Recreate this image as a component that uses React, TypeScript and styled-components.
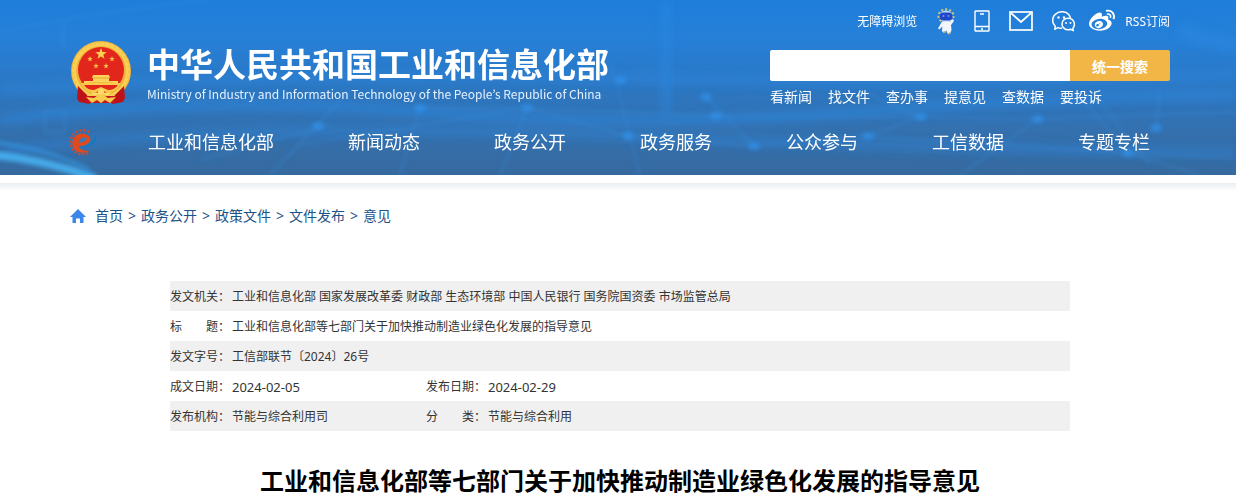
import React from "react";
import styled, { createGlobalStyle } from "styled-components";
import { FaWeibo } from "react-icons/fa";

const GlobalStyle = createGlobalStyle`
  * { box-sizing: border-box; }
  body {
    margin: 0;
    background: #fff;
    color: #333;
    font-family: "Noto Sans", "Noto Sans CJK SC", sans-serif;
    font-size: 12px;
  }
  a { color: inherit; text-decoration: none; }
`;

const Page = styled.div`
  overflow: hidden;
`;

const Container = styled.div<{ $width: number }>`
  width: 100%;
  max-width: ${(p) => p.$width + 4}px;
  margin: 0 auto;
  padding-left: 4px;
  position: relative;
`;

const Header = styled.header`
  position: relative;
  color: #fff;
  background: linear-gradient(#1e7edb 0%, #2680d8 22%, #2c77c2 50%, #3470ae 75%, #366a9f 100%);
`;

const Backdrop = styled.svg`
  position: absolute;
  inset: 0;
  width: 100%;
  height: 100%;
`;

const Masthead = styled.div`
  display: flex;
  justify-content: space-between;
`;

const Brand = styled.a`
  display: flex;
  gap: 15px;
  padding-top: 40px;
`;

const BrandText = styled.div`
  padding-top: 6px;
  white-space: nowrap;
`;

const BrandName = styled.div`
  font-family: "Noto Sans CJK SC", sans-serif;
  font-size: 33px;
  line-height: 34px;
  font-weight: 700;
`;

const BrandSub = styled.div`
  font-family: "Noto Sans CJK KR", sans-serif;
  font-size: 12px;
  line-height: 20px;
  padding-top: 4px;
  color: #e4f1ff;
`;

const Tools = styled.div`
  width: 400px;
`;

const UtilityBar = styled.div`
  display: flex;
  align-items: center;
  justify-content: flex-end;
  height: 42px;
`;

const UtilityLink = styled.a<{ $gap?: number }>`
  display: flex;
  align-items: center;
  margin-left: ${(p) => p.$gap ?? 0}px;
  white-space: nowrap;
`;

const SearchForm = styled.form`
  display: flex;
  height: 31px;
  margin-top: 8px;
  border-radius: 2px;
  overflow: hidden;
`;

const SearchInput = styled.input`
  flex: 1;
  min-width: 0;
  border: 0;
  padding: 0 10px;
  outline: none;
  background: #fff;
  font: inherit;
`;

const SearchButton = styled.button`
  width: 100px;
  border: 0;
  padding: 0;
  background: #f2b647;
  color: #fff;
  font: inherit;
  font-size: 14px;
  font-weight: 700;
`;

const QuickLinks = styled.div`
  display: flex;
  gap: 16px;
  font-size: 14px;
  line-height: 32px;
`;

const Nav = styled.nav`
  display: flex;
  align-items: center;
  gap: 74px;
  padding: 11px 0 15px;
  font-size: 18px;
  line-height: 36px;
  white-space: nowrap;
`;

const NavLogo = styled.a`
  display: flex;
  width: 28px;
  margin: 0 -23px 0 -1px;
`;

const Strip = styled.div`
  height: 8px;
  margin-top: 8px;
  background: linear-gradient(#e9edf1, #fff);
`;

const Breadcrumb = styled.nav`
  display: flex;
  align-items: center;
  gap: 5px;
  padding-top: 15px;
  font-size: 14px;
  line-height: 20px;
  color: #1d5288;
`;

const HomeIcon = styled.svg`
  margin-right: 4px;
`;

const InfoTable = styled.table`
  width: 100%;
  margin-top: 55px;
  border-collapse: collapse;
  table-layout: fixed;
  line-height: 28px;

  tr:nth-child(odd) { background: #f0f0f0; }
  th, td {
    height: 30px;
    padding: 2px 0 0;
    text-align: left;
    vertical-align: middle;
    font-weight: 400;
    white-space: nowrap;
  }
`;

const DateText = styled.time`
  display: block;
  font-size: 13px;
`;

const Title = styled.h1`
  margin: 0;
  padding-top: 32px;
  color: #000;
  font-size: 24px;
  line-height: 36px;
  font-weight: 700;
  text-align: center;
`;

const starPoints = (cx: number, cy: number, r: number) =>
  Array.from({ length: 10 }, (_, i) => {
    const radius = i % 2 ? r * 0.4 : r;
    const a = (Math.PI / 5) * i - Math.PI / 2;
    return `${(cx + radius * Math.cos(a)).toFixed(2)},${(cy + radius * Math.sin(a)).toFixed(2)}`;
  }).join(" ");

const Emblem = () => (
  <svg width="62" height="65" viewBox="0 0 62 65" aria-hidden="true">
    <circle cx="31" cy="31" r="30" fill="#eeb43a" />
    <circle cx="31" cy="31" r="27" fill="none" stroke="#fbcf55" strokeWidth="4" />
    <circle cx="31" cy="31" r="28" fill="none" stroke="#f5c346" strokeWidth="2" strokeDasharray="2 3" />
    <circle cx="31" cy="30" r="23" fill="#e3261c" />
    <polygon points={starPoints(31, 14, 6)} fill="#ffd34f" />
    <polygon points={starPoints(20, 19, 3)} fill="#f4c04a" />
    <polygon points={starPoints(42, 19, 3)} fill="#f4c04a" />
    <polygon points={starPoints(26, 26, 3)} fill="#f4c04a" />
    <polygon points={starPoints(36, 26, 3)} fill="#f4c04a" />
    <path d="M23 35h16l1 3h-1v3h9v3H14v-3h9v-3h-1z" fill="#fbd35a" />
    <path d="M23 38h16M19 43h24" stroke="#e8a530" />
    <path d="M11 43h40q-5 9-13 10l-7-3-7 3q-8-1-13-10z" fill="#fbc94c" />
    <path d="M14 45h34q-3 5-10 5l-7-3-7 3q-7 0-10-5z" fill="#e3261c" />
    <path d="M8 46l9 9 3 9-11-2-2-4z M54 46l-9 9-3 9 11-2 2-4z" fill="#bd1218" />
    <path d="M16 56h30l-2 7H18z" fill="#c9181c" />
    <path d="M16 57l8 1 7-5 7 5 8-1-6 6-5-3-4 3-4-3-5 3z" fill="#f7cb4d" />
    <path d="M22 53q5 3 9-2 4 5 9 2" fill="none" stroke="#ffdc69" strokeWidth="2" />
    <circle cx="31" cy="52" r="3" fill="#ffdc69" />
  </svg>
);

const Mascot = () => (
  <svg width="18" height="27" viewBox="0 0 18 27" aria-hidden="true">
    <ellipse cx="9" cy="8" rx="7.4" ry="6.6" fill="none" stroke="#c9c67c" strokeWidth="2.4" strokeDasharray="2 2" />
    <ellipse cx="9" cy="8.500" rx="6.500" ry="6" fill="#b8dcff" />
    <rect x="2.500" y="4.500" width="13" height="8" rx="4" fill="#2346c4" />
    <circle cx="6.500" cy="8" r="1" fill="#6c98f5" />
    <circle cx="11.500" cy="8" r="1" fill="#6c98f5" />
    <path d="M5 13.500h8l3-2.500 1 2-3 4 .5 5-1.500 4-2.500-.5-1-3-2 2-2.500-1 .3-5-3 3-1.300-1z" fill="#f2f6fb" />
    <path d="M6 24.500l3-1M11 26l2-1" stroke="#c6ad73" strokeWidth="1.500" />
  </svg>
);

const PhoneIcon = () => (
  <svg width="16" height="22" viewBox="0 0 16 22" fill="none" stroke="#fff" strokeWidth="1.400" aria-hidden="true">
    <rect x="1" y="1" width="14" height="20" rx=".5" />
    <path d="M1 16.500h14M6 4h4M7 19h2" />
  </svg>
);

const MailIcon = () => (
  <svg width="24" height="20" viewBox="0 0 24 20" fill="none" stroke="#fff" strokeWidth="1.700" aria-hidden="true">
    <rect x="1" y="1" width="22" height="18" />
    <path d="M2 2l10 9L22 2" />
  </svg>
);

const WechatIcon = () => (
  <svg width="23" height="21" viewBox="0 0 23 21" fill="none" stroke="#fff" strokeWidth="1.500" strokeLinejoin="round" aria-hidden="true">
    <path d="M10 17.200Q7.500 17.400 5.800 16.600L2.800 18.300 3.300 15.200C-.5 12 0 6 3.500 3.200C7-.2 13.500 0 16.500 3.200Q18.200 5 18.300 7" />
    <path d="M16.200 7.200C12.600 7.200 10 9.800 10 13S12.800 18.800 16.300 18.800Q17.700 18.800 18.900 18.300L21.300 19.700 20.900 17.200C24.100 13.400 21.800 7.200 16.200 7.200Z" />
    <g fill="#fff" stroke="none">
      <circle cx="6.500" cy="6.500" r="1.200" />
      <circle cx="12" cy="6.500" r="1.200" />
      <circle cx="14" cy="12" r="1" />
      <circle cx="18.500" cy="12" r="1" />
    </g>
  </svg>
);

const GearLogo = () => (
  <svg width="28" height="26" viewBox="2 1 25 23" fill="none" aria-hidden="true">
    <path d="M20 3.600A10.800 10.800 0 1 0 20.500 21.500" stroke="#d04a2c" strokeWidth="2.200" strokeDasharray="1.800 1.800" />
    <path d="M20 7.500C17 4 10 3.500 6.500 8.500C3.500 13 5 19 10 21.200C13.500 22.700 18 22 20.500 20C16 21 11.500 19.500 10.500 16C14 16.500 18.500 15 20.500 12Q22 9.500 20 7.500Z" fill="#e24a1b" />
    <path d="M10.500 13.200C11 9.500 15 7.500 17.500 9C18.500 11 15 13 10.500 13.200Z" fill="#3d79b8" />
    <path d="M26 6.500C27.500 10 24 15.500 18.500 17Q15 18 12 16.800C18 16.500 22.500 13.500 24 9Z" fill="#1778be" />
  </svg>
);

const nodes = [
  [420, 108], [527, 108], [628, 136], [621, 80], [716, 116], [754, 146],
  [868, 136], [921, 117], [1038, 119], [1156, 128], [1128, 153], [318, 126], [706, 97],
];

const HeaderBackdrop = () => (
  <Backdrop viewBox="0 0 1236 175" preserveAspectRatio="none" aria-hidden="true">
    <defs>
      <filter id="soft" x="-20%" y="-20%" width="140%" height="140%">
        <feGaussianBlur stdDeviation="2" />
      </filter>
      <filter id="haze" filterUnits="userSpaceOnUse" x="-20" y="-20" width="1276" height="215">
        <feGaussianBlur stdDeviation="5" />
      </filter>
    </defs>
    <g fill="none" stroke="#2d8ae4" filter="url(#haze)">
      <path d="M0 120Q200 95 420 112T860 112T1236 95" strokeWidth="8" opacity=".6" />
      <path d="M0 152Q220 120 628 136T1236 152" strokeWidth="7" opacity=".5" />
      <path d="M0 90Q300 70 640 78T1236 75" strokeWidth="9" opacity=".45" />
      <path d="M1180 30L1236 48" strokeWidth="14" opacity=".5" />
      <path d="M666 0V112" strokeWidth="9" opacity=".5" />
    </g>
    <g fill="none" stroke="#3a92e2" strokeWidth="2" opacity=".38" filter="url(#soft)">
      <path d="M0 32Q80 14 210 0M63 24V50M45 112h20v20H45z" />
      <path d="M400 175L420 108 527 108 716 116 921 117 1038 119 1236 112" />
      <path d="M300 145L527 108 628 136 754 146 868 136 1128 153 1236 158" />
      <path d="M610 60L640 175M500 175L527 108 M706 97L754 146 868 136 921 117 860 90" />
      <path d="M1090 90L1150 165M1156 128L1160 90M1038 119L960 175M1080 96L1128 153 1200 175" />
      <path d="M270 175L350 90M200 160L330 125" />
    </g>
    <g fill="#3094ef" filter="url(#soft)" opacity=".65">
      {nodes.map(([x, y]) => <ellipse key={`${x}-${y}`} cx={x} cy={y} rx="6" ry="4" />)}
    </g>
    <path d="M-5 155Q45 160 95 178" fill="none" stroke="#49b6f6" strokeWidth="8" opacity=".85" filter="url(#soft)" />
    <path d="M-5 142Q50 150 90 170" fill="none" stroke="#329be9" strokeWidth="3" opacity=".8" filter="url(#soft)" />
  </Backdrop>
);

const quick = ["看新闻", "找文件", "查办事", "提意见", "查数据", "要投诉"];
const sections = ["工业和信息化部", "新闻动态", "政务公开", "政务服务", "公众参与", "工信数据", "专题专栏"];
const crumbs = ["首页", "政务公开", "政策文件", "文件发布", "意见"];

export default function App() {
  return (
    <Page>
      <GlobalStyle />
      <Header>
        <HeaderBackdrop />
        <Container $width={1100}>
          <Masthead>
            <Brand href="#">
              <Emblem />
              <BrandText>
                <BrandName>中华人民共和国工业和信息化部</BrandName>
                <BrandSub>Ministry of Industry and Information Technology of the People’s Republic of China</BrandSub>
              </BrandText>
            </Brand>
            <Tools>
              <UtilityBar>
                <UtilityLink href="#">无障碍浏览</UtilityLink>
                <UtilityLink href="#" $gap={20} aria-label="智能问答"><Mascot /></UtilityLink>
                <UtilityLink href="#" $gap={19} aria-label="手机版"><PhoneIcon /></UtilityLink>
                <UtilityLink href="#" $gap={19} aria-label="邮箱"><MailIcon /></UtilityLink>
                <UtilityLink href="#" $gap={19} aria-label="微信"><WechatIcon /></UtilityLink>
                <UtilityLink href="#" $gap={14} aria-label="微博"><FaWeibo size={26} /></UtilityLink>
                <UtilityLink href="#" $gap={10}>RSS订阅</UtilityLink>
              </UtilityBar>
              <SearchForm role="search" onSubmit={(e) => e.preventDefault()}>
                <SearchInput type="text" aria-label="搜索" />
                <SearchButton type="submit">统一搜索</SearchButton>
              </SearchForm>
              <QuickLinks>
                {quick.map((label) => <a key={label} href="#">{label}</a>)}
              </QuickLinks>
            </Tools>
          </Masthead>
          <Nav>
            <NavLogo href="#" aria-label="工信部"><GearLogo /></NavLogo>
            {sections.map((label) => <a key={label} href="#">{label}</a>)}
          </Nav>
        </Container>
      </Header>
      <Strip />
      <main>
        <Container $width={1100}>
          <Breadcrumb>
            <HomeIcon width="16" height="14" viewBox="0 0 16 14" aria-hidden="true">
              <path d="M8 0L16 8H13.500V14H10V9.500H6V14H2.500V8H0z" fill="#3d86ea" />
            </HomeIcon>
            {crumbs.map((label, i) => (
              <React.Fragment key={label}>
                {i > 0 && <span>&gt;</span>}
                <a href="#">{label}</a>
              </React.Fragment>
            ))}
          </Breadcrumb>
        </Container>
        <Container $width={900}>
          <InfoTable>
            <colgroup>
              <col width="62" />
              <col width="194" />
              <col width="62" />
              <col />
            </colgroup>
            <tbody>
              <tr>
                <th scope="row">发文机关：</th>
                <td colSpan={3}>工业和信息化部 国家发展改革委 财政部 生态环境部 中国人民银行 国务院国资委 市场监管总局</td>
              </tr>
              <tr>
                <th scope="row">标　　题：</th>
                <td colSpan={3}>工业和信息化部等七部门关于加快推动制造业绿色化发展的指导意见</td>
              </tr>
              <tr>
                <th scope="row">发文字号：</th>
                <td colSpan={3}>工信部联节〔2024〕26号</td>
              </tr>
              <tr>
                <th scope="row">成文日期：</th>
                <td><DateText>2024-02-05</DateText></td>
                <th scope="row">发布日期：</th>
                <td><DateText>2024-02-29</DateText></td>
              </tr>
              <tr>
                <th scope="row">发布机构：</th>
                <td>节能与综合利用司</td>
                <th scope="row">分　　类：</th>
                <td>节能与综合利用</td>
              </tr>
            </tbody>
          </InfoTable>
          <Title>工业和信息化部等七部门关于加快推动制造业绿色化发展的指导意见</Title>
        </Container>
      </main>
    </Page>
  );
}
